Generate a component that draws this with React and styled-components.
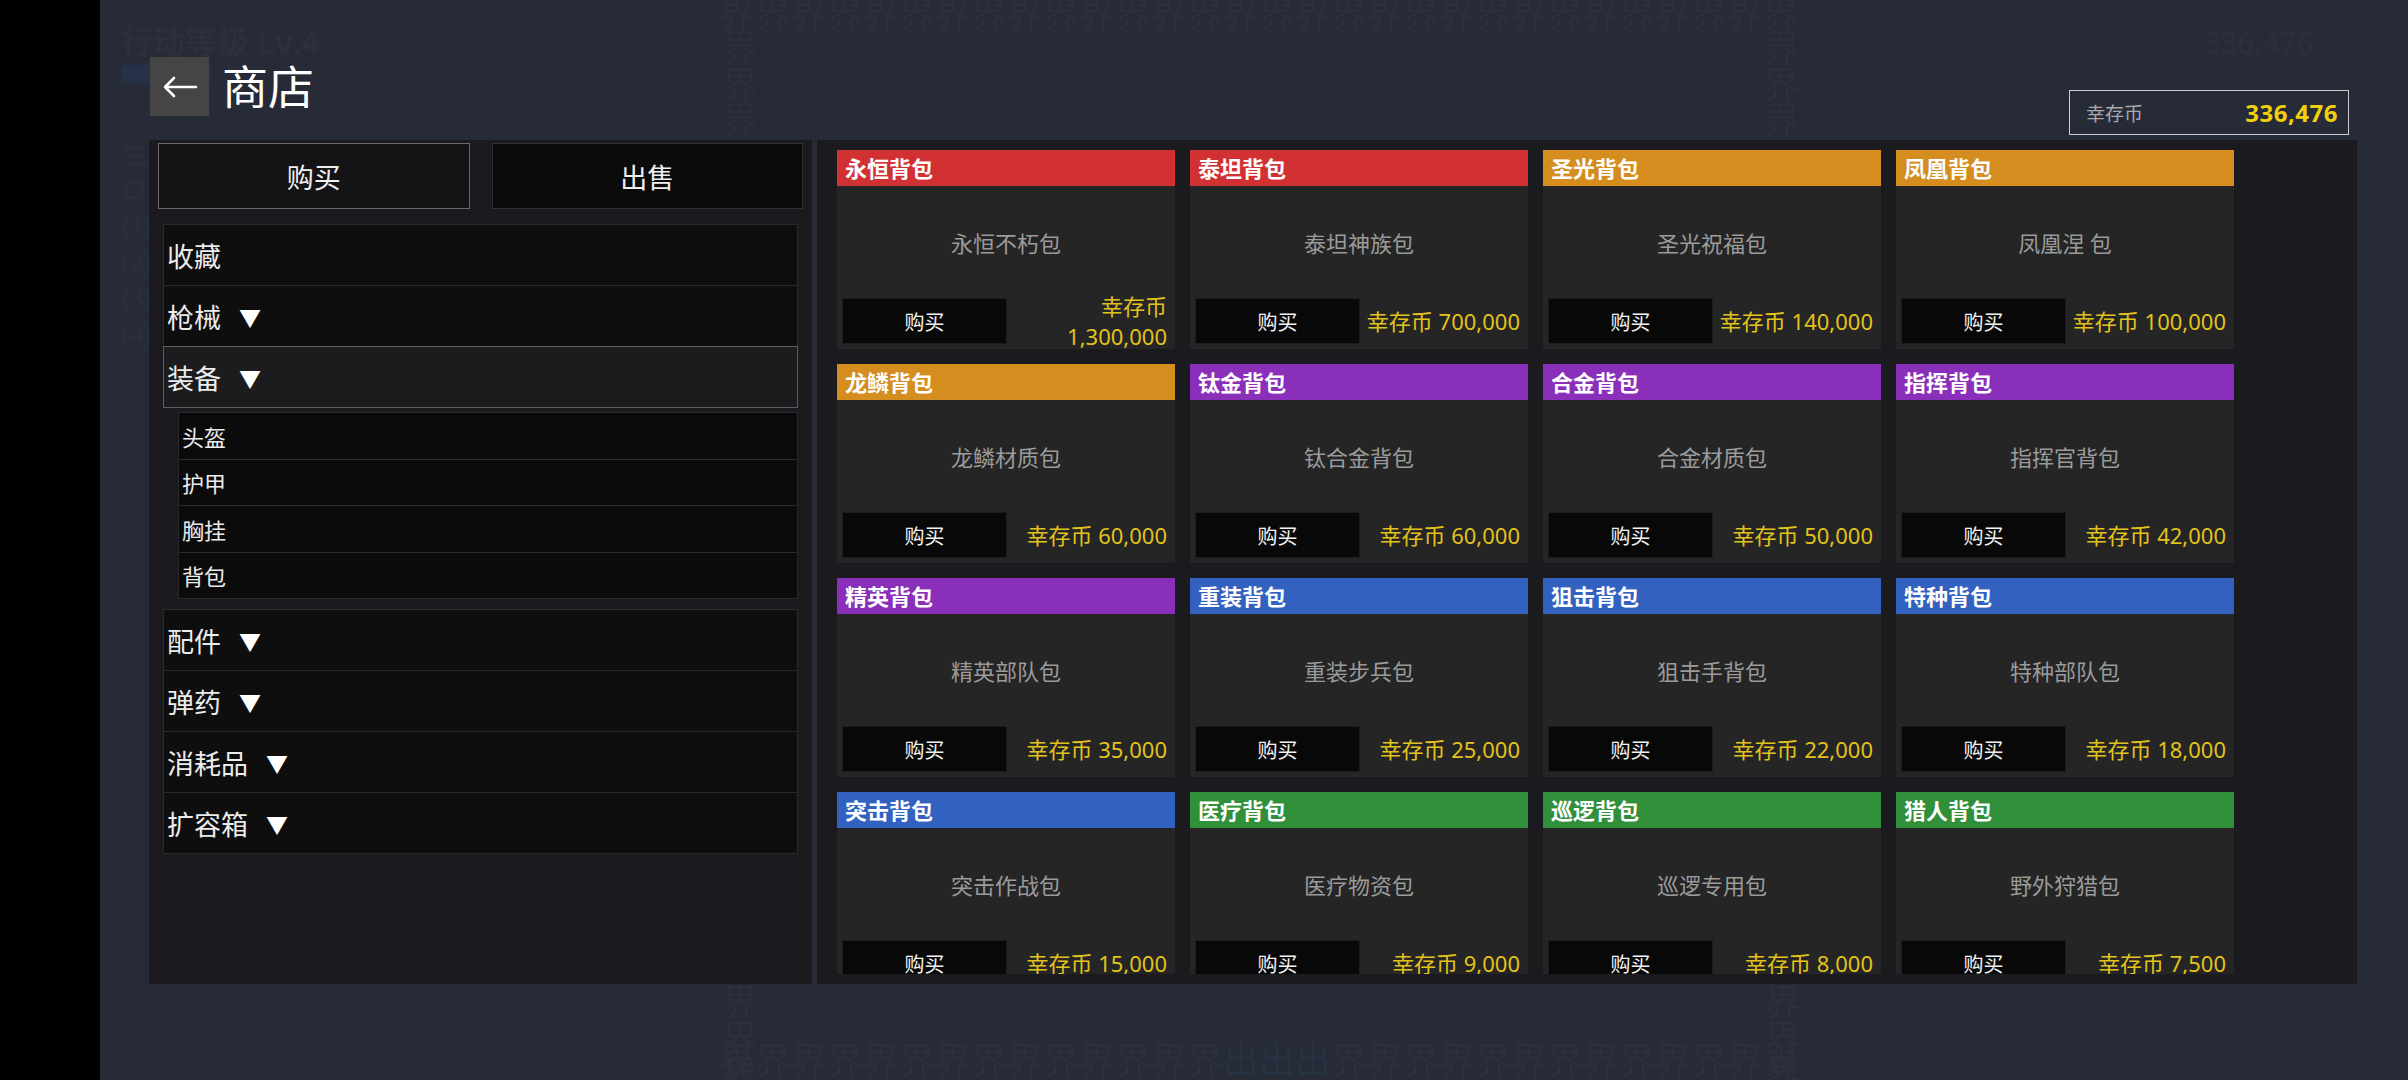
import React from 'react';
import styled, { createGlobalStyle } from 'styled-components';

const GlobalStyle = createGlobalStyle`
  html, body {
    margin: 0;
    padding: 0;
    background: #000;
  }
  body {
    font-family: "Noto Sans", "Noto Sans CJK SC", sans-serif;
  }
  * {
    box-sizing: border-box;
  }
`;

const Page = styled.div`
  display: flex;
  width: 2408px;
  height: 1080px;
  overflow: hidden;
  background: #000;
`;

const Strip = styled.div`
  flex: none;
  width: 100px;
  background: #000;
`;

const Main = styled.div`
  position: relative;
  flex: 1;
  display: flex;
  flex-direction: column;
  padding: 0 51px 0 49px;
  background: #262b37;
  overflow: hidden;
`;

// faded text of the screen that sits under the shop
const Ghost = styled.div`
  position: absolute;
  left: ${p => p.x}px;
  top: ${p => p.y}px;
  color: ${p => p.tint || '#2b303c'};
  font-size: ${p => p.size || 36}px;
  font-weight: ${p => (p.bold ? 700 : 400)};
  line-height: ${p => p.lh || 1};
  white-space: pre;
  pointer-events: none;
  writing-mode: ${p => (p.vertical ? 'vertical-rl' : 'horizontal-tb')};
`;

const GhostBar = styled.div`
  position: absolute;
  left: 21px;
  top: 65px;
  width: 90px;
  height: 18px;
  background: #27324a;
`;

const Header = styled.header`
  position: relative;
  z-index: 1;
  flex: none;
  height: 140px;
  display: flex;
  justify-content: space-between;
  align-items: flex-start;
`;

const TitleGroup = styled.div`
  display: flex;
  align-items: center;
  gap: 13px;
  margin-top: 57px;
  margin-left: 1px;
`;

const BackButton = styled.button`
  width: 59px;
  height: 59px;
  display: flex;
  align-items: center;
  justify-content: center;
  padding: 0;
  border: none;
  background: #454545;
  cursor: pointer;
`;

const Title = styled.h1`
  margin: 0;
  font-size: 46px;
  font-weight: 400;
  line-height: 59px;
  color: #fff;
`;

const Wallet = styled.div`
  width: 280px;
  height: 45px;
  margin: 90px 8px 0 0;
  display: flex;
  align-items: center;
  justify-content: space-between;
  padding: 0 10px 0 16px;
  border: 1px solid #cdcdcd;
  .label {
    font-size: 19px;
    color: #a9a9a9;
  }
  .value {
    font-size: 24px;
    font-weight: 700;
    color: #f2d00c;
    letter-spacing: 0.5px;
  }
`;

const Body = styled.div`
  position: relative;
  z-index: 1;
  flex: none;
  height: 844px;
  display: flex;
  gap: 5px;
`;

const Sidebar = styled.aside`
  flex: none;
  width: 663px;
  padding: 3px 9px 0;
  background: #1b1b1f;
`;

const Tabs = styled.div`
  display: grid;
  grid-template-columns: 1fr 1fr;
  gap: 22px;
`;

const Tab = styled.button`
  height: 66px;
  padding: 0;
  border: 1px solid ${p => (p.active ? '#68686d' : '#2f2f31')};
  background: ${p => (p.active ? '#141417' : '#0b0b0c')};
  color: #f0f0f0;
  font-family: inherit;
  font-size: 27px;
`;

const CatList = styled.div`
  display: flex;
  flex-direction: column;
  margin: ${p => (p.first ? '15px' : '0')} 5px 0;
`;

const CatRow = styled.div`
  height: 62px;
  display: flex;
  align-items: center;
  padding-left: 3px;
  border: 1px solid ${p => (p.open ? '#5e5e63' : '#2a2a2c')};
  background: ${p => (p.open ? '#1c1c1f' : '#0e0e0f')};
  color: #ececec;
  font-size: 27px;
  & + & {
    margin-top: -1px;
  }
  .arrow {
    margin-left: 18px;
    font-size: 22px;
    color: #fff;
  }
`;

const SubList = styled.div`
  display: flex;
  flex-direction: column;
  margin: 4px 5px 10px 20px;
`;

const SubRow = styled.div`
  height: 47.5px;
  display: flex;
  align-items: center;
  padding-left: 3px;
  border: 1px solid #2a2a2c;
  background: #0b0b0c;
  color: #ececec;
  font-size: 22px;
  & + & {
    margin-top: -1px;
  }
`;

const Shelf = styled.section`
  flex: 1;
  padding: 10px 20px;
  background: #1b1b1f;
  overflow: hidden;
`;

const Grid = styled.div`
  display: grid;
  grid-template-columns: repeat(4, 338px);
  grid-auto-rows: 199px;
  gap: 15px;
  height: 824px;
  overflow: hidden;
`;

const Card = styled.div`
  display: flex;
  flex-direction: column;
  background: #252525;
`;

const CardHead = styled.div`
  flex: none;
  height: 36px;
  padding-left: 8px;
  background: ${p => p.color};
  color: #fff;
  font-size: 22px;
  font-weight: 700;
  line-height: 36px;
`;

const CardName = styled.div`
  flex: 1;
  display: flex;
  align-items: center;
  justify-content: center;
  color: #9b9b9b;
  font-size: 22px;
`;

const CardFoot = styled.div`
  flex: none;
  height: 51px;
  display: flex;
  align-items: center;
  gap: 2px;
  padding: 0 8px 5px 5px;
`;

const BuyButton = styled.button`
  flex: none;
  width: 165px;
  height: 46px;
  padding: 0;
  border: 1px solid #1c1c1c;
  background: #080808;
  color: #f2f2f2;
  font-family: inherit;
  font-size: 20px;
`;

const Price = styled.div`
  flex: 1;
  text-align: right;
  color: #e2c21c;
  font-size: 22px;
  line-height: 30px;
`;

const COLORS = {
  red: '#d23134',
  orange: '#d48d1e',
  purple: '#8a2fb9',
  blue: '#3361bf',
  green: '#30903a',
};

const items = [
  { title: '永恒背包', name: '永恒不朽包', price: '1,300,000', color: 'red' },
  { title: '泰坦背包', name: '泰坦神族包', price: '700,000', color: 'red' },
  { title: '圣光背包', name: '圣光祝福包', price: '140,000', color: 'orange' },
  { title: '凤凰背包', name: '凤凰涅 包', price: '100,000', color: 'orange' },
  { title: '龙鳞背包', name: '龙鳞材质包', price: '60,000', color: 'orange' },
  { title: '钛金背包', name: '钛合金背包', price: '60,000', color: 'purple' },
  { title: '合金背包', name: '合金材质包', price: '50,000', color: 'purple' },
  { title: '指挥背包', name: '指挥官背包', price: '42,000', color: 'purple' },
  { title: '精英背包', name: '精英部队包', price: '35,000', color: 'purple' },
  { title: '重装背包', name: '重装步兵包', price: '25,000', color: 'blue' },
  { title: '狙击背包', name: '狙击手背包', price: '22,000', color: 'blue' },
  { title: '特种背包', name: '特种部队包', price: '18,000', color: 'blue' },
  { title: '突击背包', name: '突击作战包', price: '15,000', color: 'blue' },
  { title: '医疗背包', name: '医疗物资包', price: '9,000', color: 'green' },
  { title: '巡逻背包', name: '巡逻专用包', price: '8,000', color: 'green' },
  { title: '猎人背包', name: '野外狩猎包', price: '7,500', color: 'green' },
];

const topCats = [
  { label: '收藏' },
  { label: '枪械', arrow: true },
  { label: '装备', arrow: true, open: true },
];
const subCats = ['头盔', '护甲', '胸挂', '背包'];
const bottomCats = ['配件', '弹药', '消耗品', '扩容箱'];

const ArrowLeft = () => (
  <svg width="36" height="22" viewBox="0 0 36 22" fill="none">
    <path d="M34 11H3M12 2L3 11L12 20" stroke="#fff" strokeWidth="2.6" strokeLinecap="round" strokeLinejoin="round" />
  </svg>
);

const ghostRow = '界'.repeat(30);
const ghostCol = '界'.repeat(4);

const App = () => {
  return (
    <>
      <GlobalStyle />
      <Page>
        <Strip />
        <Main>
          <Ghost x={21} y={26} size={32} bold>行动等级 Lv.4</Ghost>
          <GhostBar />
          <Ghost x={22} y={136} size={24} lh={1.5} tint="#2a303c">{'生\n口\n[1]\n[2]\n[3]\n[4]'}</Ghost>
          <Ghost x={2103} y={28} size={30}>336,476</Ghost>
          <Ghost x={619} y={-4} size={36}>{ghostRow}</Ghost>
          <Ghost x={619} y={30} size={36} vertical>{ghostCol}</Ghost>
          <Ghost x={1660} y={30} size={36} vertical>{ghostCol}</Ghost>
          <Ghost x={619} y={984} size={36} vertical>{ghostCol}</Ghost>
          <Ghost x={1662} y={984} size={36} vertical>{ghostCol}</Ghost>
          <Ghost x={619} y={1043} size={36}>{'界'.repeat(14)}<span style={{ color: '#273243' }}>出出出</span>{'界'.repeat(13)}</Ghost>

          <Header>
            <TitleGroup>
              <BackButton aria-label="返回">
                <ArrowLeft />
              </BackButton>
              <Title>商店</Title>
            </TitleGroup>
            <Wallet>
              <span className="label">幸存币</span>
              <span className="value">336,476</span>
            </Wallet>
          </Header>

          <Body>
            <Sidebar>
              <Tabs>
                <Tab active>购买</Tab>
                <Tab>出售</Tab>
              </Tabs>
              <CatList first>
                {topCats.map(c => (
                  <CatRow key={c.label} open={c.open}>
                    {c.label}
                    {c.arrow && <span className="arrow">▼</span>}
                  </CatRow>
                ))}
              </CatList>
              <SubList>
                {subCats.map(s => (
                  <SubRow key={s}>{s}</SubRow>
                ))}
              </SubList>
              <CatList>
                {bottomCats.map(c => (
                  <CatRow key={c}>
                    {c}
                    <span className="arrow">▼</span>
                  </CatRow>
                ))}
              </CatList>
            </Sidebar>

            <Shelf>
              <Grid>
                {items.map(it => (
                  <Card key={it.title}>
                    <CardHead color={COLORS[it.color]}>{it.title}</CardHead>
                    <CardName>{it.name}</CardName>
                    <CardFoot>
                      <BuyButton>购买</BuyButton>
                      <Price>幸存币 {it.price}</Price>
                    </CardFoot>
                  </Card>
                ))}
              </Grid>
            </Shelf>
          </Body>
        </Main>
      </Page>
    </>
  );
};

export default App;
